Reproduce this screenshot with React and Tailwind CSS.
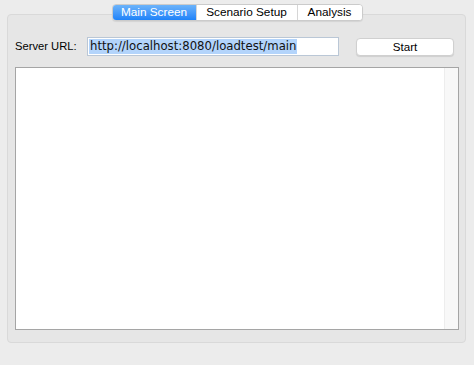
import { useState } from "react";

const tabs = [
  { label: "Main Screen", width: "w-[83px]" },
  { label: "Scenario Setup", width: "w-[101px]" },
  { label: "Analysis", width: "w-[65px]" },
];

function App() {
  const [active, setActive] = useState(0);

  return (
    <div
      className="w-[474px] h-[365px] bg-[#ececec] pt-[4px] overflow-hidden text-black"
      style={{ fontFamily: '"Liberation Sans", Arial, sans-serif' }}
    >
      {/* Tab strip */}
      <div className="relative z-10 flex justify-center">
        <div className="flex h-[17px] rounded-[4px] border border-[#cbcbcb] bg-white shadow-[0_1px_1px_rgba(0,0,0,0.08)] overflow-hidden">
          {tabs.map((tab, i) => (
            <button
              key={tab.label}
              onClick={() => setActive(i)}
              className={
                i === active
                  ? `${tab.width} text-[11.8px] leading-[15px] text-white bg-gradient-to-b from-[#6bb3fa] to-[#1c82f9]`
                  : `${tab.width} text-[11.8px] leading-[15px] border-l border-[#d6d6d6] bg-white`
              }
            >
              {tab.label}
            </button>
          ))}
        </div>
      </div>

      {/* Tab content */}
      <div className="-mt-[7px] ml-[7px] w-[459px] h-[329px] rounded-[4px] border border-[#d9d9d9] bg-[#e6e6e6] pt-[22px] px-[7px]">
        <div className="flex items-center h-[19px]">
          <span className="w-[72px] text-[11.2px]">Server URL:</span>
          <div className="w-[252px] h-[19px] border border-[#bac7d6] bg-white pl-[1px] py-[1px] flex">
            <span
              className="bg-[#b3d4fb] pl-[1px] pr-[1px] leading-[15px] text-[11.7px] text-[#111]"
              style={{ fontFamily: '"DejaVu Sans", sans-serif' }}
            >
              http://localhost:8080/loadtest/main
            </span>
          </div>
          <button className="ml-[17px] w-[98px] h-[18px] rounded-[4px] border border-[#d0d0d0] bg-white shadow-[0_1px_1px_rgba(0,0,0,0.1)] text-[11.6px] leading-[16px]">
            Start
          </button>
        </div>

        <div className="mt-[11px] w-[444px] h-[263px] border border-[#a5a5a5] bg-white flex justify-end">
          <div className="w-[14px] h-full border-l border-[#ededed] bg-[#f8f8f8]" />
        </div>
      </div>
    </div>
  );
}

export default App;
